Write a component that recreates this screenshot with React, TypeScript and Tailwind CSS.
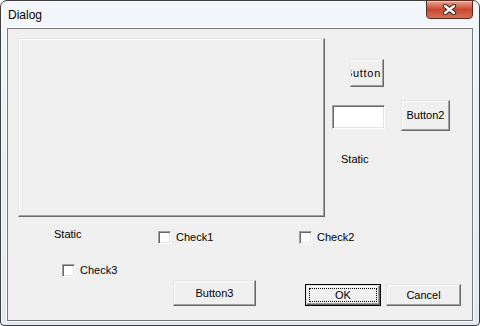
import React from "react";

const font = { fontFamily: '"Liberation Sans", Arial, sans-serif' };

// classic raised 3D bevel used by buttons and the picture frame
const raised =
  "border border-t-[#e3e3e3] border-l-[#e3e3e3] border-b-[#696969] border-r-[#696969] shadow-[inset_-1px_-1px_0_#a0a0a0,inset_1px_1px_0_#ffffff] bg-[#f0f0f0]";

// sunken edge for edit / checkbox
const sunken =
  "border border-t-[#a0a0a0] border-l-[#a0a0a0] border-b-[#ffffff] border-r-[#ffffff] shadow-[inset_1px_1px_0_#696969,inset_-1px_-1px_0_#e3e3e3] bg-white";

function Btn({ label, className }: { label: string; className: string }) {
  return (
    <div
      className={`${raised} ${className} flex items-center justify-center overflow-hidden whitespace-nowrap text-[11px] leading-[13px] text-black`}
    >
      {label}
    </div>
  );
}

function Check({ label }: { label: string }) {
  return (
    <div className="flex items-start">
      <span className={`${sunken} block w-[13px] h-[13px]`} />
      <span className="ml-[5px] text-[11px] leading-[13px] text-black">{label}</span>
    </div>
  );
}

function CloseButton() {
  return (
    <div className="-mt-px w-[47px] h-[19px] rounded-b-[4px] border border-[#5b2a20] bg-gradient-to-b from-[#e8a493] via-[#c9452e] to-[#d5705a] shadow-[inset_0_1px_0_#f3c9bd] flex items-center justify-center">
      <svg width="15" height="11" viewBox="0 0 15 11">
        <path d="M3 2 L12 9 M12 2 L3 9" stroke="#3b1a14" strokeWidth="4.2" strokeLinecap="round" />
        <path d="M3 2 L12 9 M12 2 L3 9" stroke="#ffffff" strokeWidth="2.4" strokeLinecap="round" />
      </svg>
    </div>
  );
}

export default function App() {
  return (
    <div style={font} className="w-[480px] h-[326px] bg-white">
      <div className="w-[480px] h-[326px] flex flex-col border border-[#3e3e3e] rounded-t-[7px] rounded-b-[4px] bg-gradient-to-b from-[#f3f6fa] to-[#e2e9f3] px-[6px] pb-[4px] shadow-[inset_1px_1px_0_#ffffff]">
        {/* title bar */}
        <div className="h-[27px] flex items-start justify-between shrink-0">
          <span className="mt-[7px] ml-px text-[12px] leading-[14px] text-black">Dialog</span>
          <CloseButton />
        </div>

        {/* client area */}
        <div className="flex-1 border border-[#787878] bg-[#f0f0f0] flex flex-col shadow-[0_0_0_1px_#ffffff]">
          <div className="mt-[9px] flex items-start">
            <div className={`${raised} ml-[10px] w-[307px] h-[179px]`} />
            <div className="flex flex-col items-start">
              {/* caption is wider than the button, so it gets clipped */}
              <Btn label="Button" className="ml-[25px] mt-[21px] w-[34px] h-[28px] pr-[8px] tracking-[0.7px]" />
              <div className="mt-[13px] flex items-start">
                <div className={`${sunken} ml-[7px] mt-[5px] w-[53px] h-[24px]`} />
                <Btn label="Button2" className="ml-[16px] w-[49px] h-[31px]" />
              </div>
              <span className="ml-[16px] mt-[22px] text-[11px] leading-[13px] text-black">Static</span>
            </div>
          </div>

          <div className="mt-[11px] flex items-start">
            <span className="ml-[46px] w-[104px] text-[11px] leading-[13px] text-black">Static</span>
            <div className="mt-[3px] w-[141px]">
              <Check label="Check1" />
            </div>
            <div className="mt-[3px]">
              <Check label="Check2" />
            </div>
          </div>

          <div className="mt-[20px] ml-[54px]">
            <Check label="Check3" />
          </div>

          <div className="mt-[3px] flex items-start">
            <Btn label="Button3" className="ml-[165px] w-[83px] h-[26px]" />
            <div className="ml-[49px] mt-[4px] w-[76px] h-[22px] border border-black">
              <div className={`${raised} w-full h-full p-[2px] flex`}>
                <div className="flex-1 border border-dotted border-black flex items-center justify-center text-[11px] leading-[13px] text-black">
                  OK
                </div>
              </div>
            </div>
            <Btn label="Cancel" className="ml-[5px] mt-[4px] w-[75px] h-[22px]" />
          </div>
        </div>
      </div>
    </div>
  );
}
